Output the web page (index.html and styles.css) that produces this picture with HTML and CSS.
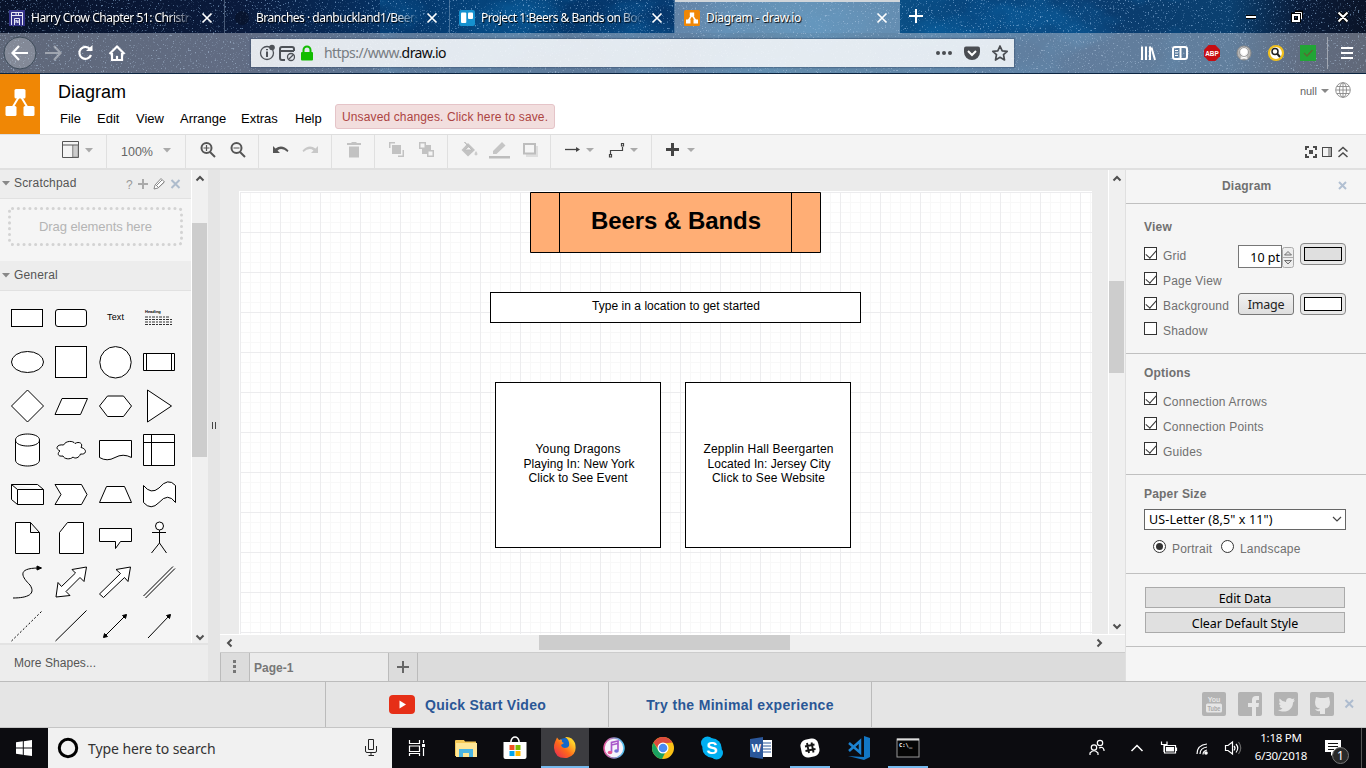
FILE: index.html
```html
<!DOCTYPE html>
<html lang="en">
<head>
<meta charset="utf-8">
<title>Diagram - draw.io</title>
<link rel="stylesheet" href="styles.css">
</head>
<body>
<div class="screen">
<header class="browser">
  <svg class="stars" width="1366" height="74">
    <filter id="starA" x="0" y="0" width="100%" height="100%" color-interpolation-filters="sRGB"><feTurbulence type="fractalNoise" baseFrequency="0.6" numOctaves="2" seed="7"/><feColorMatrix values="0 0 0 0 .65  0 0 0 0 .8  0 0 0 0 .95  7 0 0 0 -4.4"/></filter>
    <filter id="starB" x="0" y="0" width="100%" height="100%" color-interpolation-filters="sRGB"><feTurbulence type="fractalNoise" baseFrequency="0.012 0.02" numOctaves="4" seed="21"/><feColorMatrix values="0 0 0 0 .05  0 0 0 0 .45  0 0 0 0 .72  3 0 0 0 -1.3"/></filter>
    <rect x="380" width="800" height="74" filter="url(#starB)" opacity=".4"/>
    <rect width="1366" height="74" filter="url(#starA)" opacity=".55"/>
  </svg>
  <div class="tabs">
    <div class="tab"><svg width="16" height="16" viewBox="0 0 16 16"><rect width="16" height="16" fill="#35338a"/><path d="M2.500 15V2.500H13.500V15M2 5.500H14M5.500 15V8.500H10.500V15M7 5V2M9.500 5V2M7 13V10L9 13V10" stroke="#e8e8f5" fill="none"/></svg><span class="label fade">Harry Crow Chapter 51: Christr</span><svg class="x" width="12" height="12" viewBox="0 0 12 12"><path d="M1.500 1.500L10.500 10.500M10.500 1.500L1.500 10.500"/></svg></div>
    <div class="tab"><svg width="16" height="16" viewBox="0 0 16 16"><circle cx="8" cy="8" r="7" fill="#060d20" opacity=".5"/></svg><span class="label fade">Branches · danbuckland1/Beers</span><svg class="x" width="12" height="12" viewBox="0 0 12 12"><path d="M1.500 1.500L10.500 10.500M10.500 1.500L1.500 10.500"/></svg></div>
    <div class="tab"><svg width="16" height="16" viewBox="0 0 16 16"><rect width="16" height="16" rx="2" fill="#1591cf"/><rect x="2" y="2.500" width="5.300" height="10.500" rx="1" fill="#fff"/><rect x="9" y="2.500" width="5" height="6.500" rx="1" fill="#fff"/></svg><span class="label fade">Project 1:Beers &amp; Bands on Boo</span><svg class="x" width="12" height="12" viewBox="0 0 12 12"><path d="M1.500 1.500L10.500 10.500M10.500 1.500L1.500 10.500"/></svg></div>
    <div class="tab active"><svg width="16" height="16" viewBox="0 0 16 16"><rect width="16" height="16" rx="1.500" fill="#f08705"/><path d="M8 5L4 11M8 5L12 11" stroke="#fff" stroke-width="1.500"/><path d="M5.800 2.500H10.200V6.500H5.800ZM2 9.500H6.500V13.500H2ZM9.500 9.500H14V13.500H9.500Z" fill="#fff"/></svg><span class="label">Diagram - draw.io</span><svg class="x" width="12" height="12" viewBox="0 0 12 12"><path d="M1.500 1.500L10.500 10.500M10.500 1.500L1.500 10.500"/></svg></div>
    <svg class="newtab" width="32" height="33" viewBox="900 0 32 33"><path d="M909 16H923M916 9V23" stroke="#fff" stroke-width="2"/></svg>
    <svg class="winctl" width="138" height="33" viewBox="1228 0 138 33"><g fill="none" stroke="#000" stroke-width="4"><path d="M1246 17H1256M1293 14.500H1299V20.500H1293ZM1295 12.500H1301V18M1338.500 12.500L1347.500 21.500M1347.500 12.500L1338.500 21.500"/></g><g fill="none" stroke="#fff" stroke-width="2"><path d="M1246 17H1256M1293 15H1299V21H1293ZM1338.500 12.500L1347.500 21.500M1347.500 12.500L1338.500 21.500"/><path stroke-width="1" d="M1295 12.500H1301.500V19"/></g></svg>
  </div>
  <div class="nav">
    <svg width="251" height="40" viewBox="0 33 251 40"><circle cx="20" cy="53" r="16" fill="#fff" fill-opacity=".22" stroke="#3d4b59"/><g fill="none" stroke="#fff" stroke-width="2.200"><path d="M28 53H13M19 46L12.500 53L19 60"/><path opacity=".4" d="M45 53H60M54 46L60.500 53L54 60"/><path d="M90 49A6 6 0 1 0 91 55"/><path d="M109.500 54L117 46.500L124.500 54M112 53V60H122V53M117 60V56"/></g><path d="M86 51H92.500V45Z" fill="#fff"/></svg>
    <div class="urlbar">
      <svg width="66" height="28" viewBox="251 39 66 28"><g fill="none" stroke="#4e5258" stroke-width="1.300"><circle cx="267" cy="53" r="6.500"/><path d="M267 51.500V57M267 49V50.200" stroke-width="2"/><path stroke-width="2" d="M294 51V49Q294 47 292 47H282Q280 47 280 49V58Q280 60 282 60H285M280 51H294"/><circle cx="291" cy="57" r="3.500"/><path d="M288.500 59.500L293.500 54.500"/></g><circle cx="272" cy="47.500" r="2.800" fill="#4e5258"/><rect x="301" y="52" width="12" height="8.500" rx="1" fill="#12bc00"/><path d="M303.500 53V50A3.500 3.500 0 0 1 310.500 50V53" fill="none" stroke="#12bc00" stroke-width="2"/></svg>
      <span class="url">https://www.<b>draw.io</b></span>
      <svg class="end" width="84" height="28" viewBox="930 39 84 28"><g fill="#4a4d52"><circle cx="938" cy="53" r="2"/><circle cx="944" cy="53" r="2"/><circle cx="950" cy="53" r="2"/><path d="M966 46.500H978Q980 46.500 980 48.500V52A8 8 0 0 1 964 52V48.500Q964 46.500 966 46.500Z"/></g><path d="M968 51L972 55L976 51" fill="none" stroke="#fff" stroke-width="2"/><path d="M1000 46L1002.200 50.800L1007.200 51.300L1003.500 54.700L1004.500 60L1000 57.300L995.500 60L996.500 54.700L992.800 51.300L997.800 50.800Z" fill="none" stroke="#4a4d52" stroke-width="1.700" stroke-linejoin="round"/></svg>
    </div>
    <svg class="addons" width="236" height="40" viewBox="1130 33 236 40"><g fill="none" stroke="#fff" stroke-width="2"><path d="M1142 46.500V60M1146 46.500V60M1150 46.500V60M1151.500 47.500L1155 60"/><rect x="1173" y="47" width="14" height="12" rx="2"/><path d="M1180.500 47V59"/><path stroke-width="1" d="M1175 50.500H1178M1175 53H1178M1175 55.500H1178"/></g><path d="M1208.700 45H1215.300L1220 49.700V56.300L1215.300 61H1208.700L1204 56.300V49.700Z" fill="#c70d12"/><text x="1212" y="55.700" textLength="13.500" lengthAdjust="spacingAndGlyphs" class="abp">ABP</text><circle cx="1244" cy="53" r="7" fill="#b5b5b5" stroke="#8a8a8a"/><path d="M1240.500 58.500H1242V55A4 4 0 1 1 1246 55V58.500H1247.500" fill="#fff" stroke="#eee" stroke-width="1.500"/><circle cx="1244" cy="52" r="4.500" fill="none" stroke="#888" stroke-width=".8"/><circle cx="1276" cy="53" r="7" fill="#fff" stroke="#f2c01c" stroke-width="2.200"/><circle cx="1275" cy="51.500" r="3" fill="none" stroke="#222" stroke-width="1.500"/><path d="M1277 53.500L1280 57" stroke="#222" stroke-width="2"/><rect x="1300" y="45" width="16" height="16" fill="#22a536"/><path d="M1304 53L1307 56L1312.500 50" fill="none" stroke="#5a6b32" stroke-width="1.500"/><path d="M1327.500 37V69" stroke="#fff" opacity=".4"/><path d="M1341 48H1353M1341 53H1353M1341 58H1353" stroke="#fff" stroke-width="2"/></svg>
  </div>
</header>

<div class="apphead">
  <svg class="logo" width="40" height="60" viewBox="0 74 40 60"><rect y="74" width="40" height="60" fill="#f08705"/><path d="M20 95L11 110M20 95L29 110" stroke="#fff" stroke-width="2"/><g fill="#fff"><rect x="14.500" y="89" width="11" height="9.500" rx="1.500"/><rect x="5.500" y="106" width="11" height="10" rx="1.500"/><rect x="23.500" y="106" width="11" height="10" rx="1.500"/></g></svg>
  <div class="headmain">
    <div class="doctitle">Diagram</div>
    <div class="menus"><span class="m1">File</span><span class="m2">Edit</span><span class="m3">View</span><span class="m4">Arrange</span><span class="m5">Extras</span><span class="m6">Help</span><span class="unsaved">Unsaved changes. Click here to save.</span></div>
  </div>
  <div class="user"><span>null</span><svg width="34" height="20" viewBox="1318 80 34 20"><path d="M1321 89H1329L1325 93Z" fill="#888"/><g fill="none" stroke="#888" stroke-width=".9"><circle cx="1343" cy="90" r="7.300"/><ellipse cx="1343" cy="90" rx="3.500" ry="7.300"/><path d="M1343 83V97M1336 90H1350M1337 86.500H1349M1337 93.500H1349"/></g></svg></div>
</div>

<div class="toolbar">
  <div class="tg t1"><svg width="44" height="33" viewBox="56 135 44 33"><path d="M62.500 141.500H78.500V157.500H62.500ZM62 145H79M73 145V158" fill="none" stroke="#555"/><rect x="73" y="145.500" width="5" height="11.500" fill="#ccc" stroke="#777" stroke-width=".5"/><path d="M85 148H93L89 152.500Z" fill="#aaa"/></svg></div>
  <div class="tg t2"><span>100%</span><svg width="10" height="6"><path d="M1 0H9L5 4.500Z" fill="#aaa"/></svg></div>
  <div class="tg t3"><svg width="72" height="33" viewBox="186 135 72 33"><g fill="none" stroke="#555" stroke-width="2"><circle cx="206.500" cy="148" r="5"/><path d="M210 152L215 157"/><path stroke-width="1.200" d="M203.500 148H209.500M206.500 145V151M233.500 148H239.500"/><circle cx="236.500" cy="148" r="5"/><path d="M240 152L245 157"/></g></svg></div>
  <div class="tg t4"><svg width="72" height="33" viewBox="259 135 72 33"><path d="M273 146V153H280L277.500 150.500Q282 147 287.500 152L288.500 150.500Q282 143.500 275.500 148.500Z" fill="#555"/><path d="M318 146V153H311L313.500 150.500Q309 147 303.500 152L302.500 150.500Q309 143.500 315.500 148.500Z" fill="#c8c8c8"/></svg></div>
  <div class="tg t5"><svg width="42" height="33" viewBox="332 135 42 33"><path d="M347 143H351L352 142H356L357 143H361V145H347ZM349 146.500H359V157.500H349Z" fill="#c2c2c2"/></svg></div>
  <div class="tg t6"><svg width="72" height="33" viewBox="375 135 72 33"><g fill="#c2c2c2"><path d="M392 145H401V154H392Z"/><path d="M389 142H395V143.500H390.500V148H389ZM398 157H404V150H402.500V155.500H398ZM422 145H431V154H422Z"/></g><path d="M419.750 142.750H425.250V148.250H419.750ZM427.750 150.750H433.250V156.250H427.750Z" fill="#f5f5f5" stroke="#c2c2c2" stroke-width="1.500"/></svg></div>
  <div class="tg t7"><svg width="102" height="33" viewBox="448 135 102 33"><path d="M468 143L475 150L468 156.500L461.500 150Z" fill="#c2c2c2"/><path d="M464.500 142L469 146.500L464.500 150H472L468 146Z" fill="#f5f5f5" stroke="#bbb"/><path d="M476 151Q479 155 476 155.500Q473 155 476 151Z" fill="#ccc"/><path d="M489 156H510V158.500H489Z" fill="#bdbdbd"/><path d="M493 154V151L502 142L505.500 145.500L496.500 154Z" fill="#c5c5c5"/><path d="M526 146H538V157H526Z" fill="#dedede"/><rect x="524" y="144" width="11" height="9.500" fill="#f5f5f5" stroke="#bdbdbd" stroke-width="2"/></svg></div>
  <div class="tg t8"><svg width="100" height="33" viewBox="551 135 100 33"><path d="M565 149.500H578" stroke="#444" stroke-width="1.300"/><path d="M576 147L580 149.500L576 152Z" fill="#444"/><path d="M586 148H594L590 152Z" fill="#aaa"/><path d="M610.500 154V150.500H622.500V147M609.500 154.500H611.500V157H609.500ZM621.500 143.500H623.500V146H621.500Z" fill="none" stroke="#444" stroke-width="1.200"/><path d="M630 148H638L634 152Z" fill="#aaa"/></svg></div>
  <div class="tg t9"><svg width="60" height="33" viewBox="652 135 60 33"><path d="M666 149.500H679M672.500 143V156" stroke="#444" stroke-width="3"/><path d="M687 148H695L691 152Z" fill="#aaa"/></svg></div>
  <svg class="right" width="66" height="33" viewBox="1300 135 66 33"><g fill="none" stroke="#4a4a4a"><path stroke-width="2" d="M1306 150V147H1309M1313 147H1316V150M1316 154V157H1313M1309 157H1306V154"/><rect x="1322.500" y="147.500" width="9" height="9"/><path stroke-width="1.500" d="M1338.500 151.500L1343 147.500L1347.500 151.500M1338.500 157L1343 153L1347.500 157"/></g><rect x="1309" y="150" width="4" height="4" fill="#4a4a4a"/><rect x="1328" y="148" width="3" height="8" fill="#aaa"/></svg>
</div>

<main class="work">
  <aside class="side">
    <div class="sidebody">
      <div class="palette">
        <div class="ptitle"><svg width="14" height="28" viewBox="0 170 14 28"><path d="M2 181H10L6 185.500Z" fill="#888"/></svg><span>Scratchpad</span><svg class="pt" width="66" height="28" viewBox="125 170 66 28"><text x="126" y="189" class="q">?</text><path d="M138 184H148M143 179V189" stroke="#aaa" stroke-width="2"/><path d="M154 189L155 185L161 178.500L164.500 182L158 188ZM156 185L158 187M157 185L162 180M159 187L164 182" fill="#fff" stroke="#888"/><path d="M171.500 180L179.500 188M179.500 180L171.500 188" stroke="#aebccc" stroke-width="2"/></svg></div>
        <div class="scratch"><svg width="191" height="62" viewBox="0 199 191 62"><rect x="9.500" y="208.500" width="172" height="36" rx="3" fill="none" stroke="#d3d3d3" stroke-width="3" stroke-linecap="round" stroke-dasharray="0.100 5.700"/><text x="95.500" y="231" textLength="113" class="drag">Drag elements here</text></svg></div>
        <div class="ptitle gen"><svg width="14" height="28" viewBox="0 170 14 28"><path d="M2 182H10L6 186.500Z" fill="#888"/></svg><span>General</span></div>
        <div class="shapes">
          <svg viewBox="-22 -22 44 44"><rect x="-15.500" y="-8.500" width="31" height="17"/></svg>
          <svg viewBox="-22 -22 44 44"><rect x="-15.500" y="-8.500" width="31" height="17" rx="2.500"/></svg>
          <svg viewBox="-22 -22 44 44"><text x="0.500" y="2" textLength="17" class="st">Text</text></svg>
          <svg viewBox="-22 -22 44 44"><text x="-14" y="-5" class="sh">Heading</text><path class="dash" d="M-14 -1H11M-14 1.500H14M-14 4H13M-14 6.500H14"/></svg>
          <svg viewBox="-22 -22 44 44"><ellipse cx="0.500" cy="0" rx="16" ry="10.500"/></svg>
          <svg viewBox="-22 -22 44 44"><rect x="-15.500" y="-15.500" width="31" height="31"/></svg>
          <svg viewBox="-22 -22 44 44"><circle cx=".5" cy=".3" r="15.700"/></svg>
          <svg viewBox="-22 -22 44 44"><path d="M-15.500 -8.500H15.500V8.500H-15.500ZM-12.500 -8.500V8.500M12.500 -8.500V8.500"/></svg>
          <svg viewBox="-22 -22 44 44"><path d="M.5 -16L16.500 0L.5 16L-15.500 0Z"/></svg>
          <svg viewBox="-22 -22 44 44"><path d="M-9 -7.500H16.500L9.500 8.500H-16Z"/></svg>
          <svg viewBox="-22 -22 44 44"><path d="M-7.500 -10H8.500L16.500 0L8.500 10.500H-7.500L-15.500 0Z"/></svg>
          <svg viewBox="-22 -22 44 44"><path d="M-11.500 -16L12.500 0L-11.500 16Z"/></svg>
          <svg viewBox="-22 -22 44 44"><path d="M-11.500 -10V10C-11.500 18 12.500 18 12.500 10V-10C12.500 -18 -11.500 -18 -11.500 -10C-11.500 -2 12.500 -2 12.500 -10"/></svg>
          <svg viewBox="-22 -22 44 44"><path d="M-7.500 -5C-5 -9.500 2 -9.500 4 -6.500C8 -9 12.500 -6.500 10 -2.500C16.500 -1 15.500 5 9.500 4C8 8 4 9 2 7C-1 10 -7 9 -8 6C-14 7 -13.500 2.500 -11 1C-17 -2 -13 -6 -7.500 -5Z"/></svg>
          <svg viewBox="-22 -22 44 44"><path d="M-15.500 -9.500H16.500V7.500Q8 3 0 7.500Q-8 12 -15.500 7.500Z"/></svg>
          <svg viewBox="-22 -22 44 44"><path d="M-15.500 -15.500H15.500V15.500H-15.500ZM-15.500 -7.500H15.500M-7.500 -15.500V15.500"/></svg>
          <svg viewBox="-22 -22 44 44"><path d="M-15.500 -9.500H10.500L16.500 -4.500V10.500H-9.500L-15.500 5.500ZM-15.500 -9.500L-9.500 -4.500H16.500M-9.500 -4.500V10.500"/></svg>
          <svg viewBox="-22 -22 44 44"><path d="M-16 -9.500H10.500L16 .5L10.500 10.500H-16L-10 .5Z"/></svg>
          <svg viewBox="-22 -22 44 44"><path d="M-8.500 -7.500H9.500L16.500 8.500H-15.500Z"/></svg>
          <svg viewBox="-22 -22 44 44"><path d="M-15.500 -8.500Q-8 1 0 -6Q9 -17 16.500 -8.500V8.500Q9 -2 0 8.500Q-8 17 -15.500 8.500Z"/></svg>
          <svg viewBox="-22 -22 44 44"><path d="M-11.500 -15.500H3.500L12.500 -5.500V15.500H-11.500ZM3.500 -15.500V-5.500H12.500"/></svg>
          <svg viewBox="-22 -22 44 44"><path d="M-3.500 -15.500H12.500V15.500H-11.500V-5.500Z"/></svg>
          <svg viewBox="-22 -22 44 44"><path d="M-15.500 -9.500H16.500V3.500H5.500L.5 10.500V3.500H-15.500Z"/></svg>
          <svg viewBox="-22 -22 44 44"><circle cx=".5" cy="-12" r="4"/><path class="nf" d="M.5 -8V5M-7 -5.500H7M.5 5L-7.500 15M.5 5L7.500 15"/></svg>
          <svg viewBox="-22 -22 44 44"><path class="nf" d="M-14 16C1 16 9 12 3 3C-4 -4 -12 -14 12 -14"/><path class="ff" d="M10 -16L14.500 -14L10 -12Z"/></svg>
          <svg viewBox="-22 -22 44 44"><path d="M-15 15L-13 .5L-9.500 4.500L4.500 -9L1 -12.500L15.500 -15L13 -.5L9 -4.500L-5 9.500L-1 13.500Z"/></svg>
          <svg viewBox="-22 -22 44 44"><path d="M-15.500 12L5.500 -8.500L1 -12.500L15.500 -15L13 -.5L9.500 -4.500L-11.500 15.500Z"/></svg>
          <svg viewBox="-22 -22 44 44"><path class="nf" d="M-15.500 14L14 -15.500M-13.500 16L16 -13.500"/></svg>
          <svg viewBox="-22 -22 44 44"><path class="nf" stroke-dasharray="2 2" d="M-15.500 15L15 -15"/></svg>
          <svg viewBox="-22 -22 44 44"><path class="nf" d="M-15.500 15L15.500 -15.500"/></svg>
          <svg viewBox="-22 -22 44 44"><path class="nf" d="M-10 10L10 -10"/><path class="ff" d="M-11.500 11.500L-10.500 7.500L-7.500 10.500ZM11.500 -11.500L10.500 -7.500L7.500 -10.500Z"/></svg>
          <svg viewBox="-22 -22 44 44"><path class="nf" d="M-11 12L10 -10"/><path class="ff" d="M11.500 -11.500L10.500 -7.500L7.500 -10.500Z"/></svg>
        </div>
      </div>
      <div class="vbar"><svg width="16" height="18"><path d="M4.500 10.500L8 7L11.500 10.500"/></svg><div class="thumb th1"></div><svg class="last" width="16" height="14"><path d="M4.500 6.500L8 10L11.500 6.500"/></svg></div>
    </div>
    <div class="more">More Shapes...</div>
  </aside>
  <div class="split"><svg width="4" height="8"><path d="M.5 0V7M3.500 0V7" stroke="#444"/></svg></div>
  <section class="center">
    <div class="canvasrow">
      <svg class="canvas" width="888" height="464" viewBox="220 170 888 464">
        <defs><pattern id="grid" x="240" y="192" width="40" height="40" patternUnits="userSpaceOnUse"><path d="M10.500 0V40M20.500 0V40M30.500 0V40M0 10.500H40M0 20.500H40M0 30.500H40" stroke="#f8f8f8"/><path d="M.5 0V40M0 .5H40" stroke="#ececee"/></pattern></defs>
        <rect x="220" y="170" width="888" height="464" fill="#ebebeb"/><rect x="239" y="191" width="853" height="443" fill="#fff"/><rect x="240" y="192" width="852" height="442" fill="url(#grid)"/>
        <g stroke="#000" fill="#fff"><path fill="#ffae75" d="M530.500 192.500H820.500V252.500H530.500ZM559.500 192.500V252.500M791.500 192.500V252.500"/><rect x="490.500" y="292.500" width="370" height="30"/><rect x="495.500" y="382.500" width="165" height="165"/><rect x="685.500" y="382.500" width="165" height="165"/></g>
        <g class="ct"><text class="big" x="676" y="229" textLength="170">Beers &amp; Bands</text><text x="676" y="310" textLength="168">Type in a location to get started</text><text x="578" y="453" textLength="85">Young Dragons</text><text x="579" y="468" textLength="111">Playing In: New York</text><text x="578" y="482" textLength="99">Click to See Event</text><text x="768.500" y="453" textLength="130">Zepplin Hall Beergarten</text><text x="769" y="468" textLength="123">Located In: Jersey City</text><text x="768.500" y="482" textLength="113">Click to See Website</text></g>
      </svg>
      <div class="vbar vb2"><svg width="16" height="18"><path d="M4.500 10.500L8 7L11.500 10.500"/></svg><div class="thumb th2"></div><svg class="last" width="16" height="16"><path d="M4.500 6.500L8 10L11.500 6.500"/></svg></div>
    </div>
    <div class="hbar"><svg width="17" height="17"><path d="M11.500 4.500L8 8L11.500 11.500"/></svg><div class="hthumb"></div><svg class="hend" width="34" height="17"><path d="M6.500 4.500L10 8L6.500 11.500"/></svg></div>
    <div class="pages"><div class="dots"><svg width="4" height="14"><path d="M0 0H3V3H0ZM0 5H3V8H0ZM0 10H3V13H0Z" fill="#777"/></svg></div><div class="page">Page-1</div><div class="add"><svg width="12" height="12"><path d="M0 6H12M6 0V12" stroke="#666" stroke-width="2"/></svg></div></div>
  </section>
  <aside class="format">
    <div class="ftitle"><span>Diagram</span><svg width="9" height="9"><path d="M1 1L8 8M8 1L1 8" stroke="#b2c0d2" stroke-width="2"/></svg></div>
    <div class="sec view">
      <h4>View</h4>
      <div class="row"><i class="cb on"></i><span class="w75">Grid</span><div class="num">10 pt</div><svg class="spin" width="12" height="22"><rect x=".5" y=".5" width="11" height="20" rx="2" fill="#eee" stroke="#aaa"/><path d="M0 10.500H12" stroke="#aaa"/><path d="M2.500 8L6 4.500L9.500 8ZM2.500 13.500H9.500L6 17Z" fill="#ddd" stroke="#555" stroke-width=".8"/></svg><div class="color"><b class="gray"></b></div></div>
      <div class="row"><i class="cb on"></i><span>Page View</span></div>
      <div class="row"><i class="cb on"></i><span class="w75">Background</span><div class="imgbtn">Image</div><div class="color"><b></b></div></div>
      <div class="row"><i class="cb"></i><span>Shadow</span></div>
    </div>
    <div class="sec opts">
      <h4>Options</h4>
      <div class="row"><i class="cb on"></i><span>Connection Arrows</span></div>
      <div class="row"><i class="cb on"></i><span>Connection Points</span></div>
      <div class="row"><i class="cb on"></i><span>Guides</span></div>
    </div>
    <div class="sec paper">
      <h4>Paper Size</h4>
      <div class="select"><span>US-Letter (8,5" x 11")</span><svg width="10" height="7"><path d="M1 1L5 5L9 1" fill="none" stroke="#444" stroke-width="1.200"/></svg></div>
      <div class="radios"><i class="rd on"></i><span class="po">Portrait</span><i class="rd"></i><span>Landscape</span></div>
    </div>
    <div class="sec acts"><div class="btn">Edit Data</div><div class="btn">Clear Default Style</div></div>
  </aside>
</main>

<footer class="promo">
  <div class="p1"></div>
  <div class="p2"><svg width="26" height="19"><rect width="26" height="19" rx="4" fill="#e62f17"/><path d="M10.500 5.500L17 9.500L10.500 13.500Z" fill="#fff"/></svg><span>Quick Start Video</span></div>
  <div class="p3"><span>Try the Minimal experience</span></div>
  <svg class="social" width="166" height="46" viewBox="1200 682 166 46"><g fill="#b3b3b3"><rect x="1202" y="692" width="24" height="24" rx="2"/><rect x="1238" y="692" width="24" height="24" rx="2"/><rect x="1274" y="692" width="24" height="24" rx="2"/><rect x="1310" y="692" width="24" height="24" rx="2"/></g><text x="1214" y="702" class="yt">You</text><rect x="1206" y="703.500" width="16" height="9" rx="1.500" fill="#e6e6e6"/><text x="1214" y="710.500" textLength="13" lengthAdjust="spacingAndGlyphs" class="yt g">Tube</text><g fill="#e6e6e6"><path d="M1252 716V707H1248V703H1252V700Q1252 696 1256 696H1259V700H1257Q1256 700 1256 701V703H1259L1258.500 707H1256V716Z"/><path d="M1278 710Q1281 710 1282.500 708.500Q1280 708 1279.500 706H1281Q1279 705 1279 702.500L1280.500 703Q1278.500 701 1279.500 698.500Q1282 701.500 1286 702Q1286 698 1289.500 698Q1291 698 1292 699L1294.500 698.500L1293.500 700.500L1295 700.500L1293 702.500C1293 710 1285 714 1278 710Z"/><path d="M1316 697L1320 698H1325L1329 697L1330 702Q1330 708 1325 708.500V714H1320V711Q1317 712 1315 709Q1318 710 1320 708.500Q1315 708 1315 702Z"/></g><path d="M1345.500 700L1353 707.500M1353 700L1345.500 707.500" stroke="#aebccf" stroke-width="2"/></svg>
</footer>

<footer class="taskbar">
  <div class="start"><svg width="16" height="16"><path d="M0 2.300L6.800 1.300V7.500H0ZM7.800 1.200L16 0V7.500H7.800ZM0 8.500H6.800V14.800L0 13.800ZM7.800 8.500H16V16L7.800 15Z" fill="#fff"/></svg></div>
  <div class="search"><svg width="22" height="22"><circle cx="11" cy="11" r="8.700" fill="none" stroke="#000" stroke-width="3"/></svg><span>Type here to search</span><svg class="mic" width="12" height="18"><path d="M3.500 .5H8.500V10.500H3.500ZM.5 7V12Q.5 13.500 2 13.500H10Q11.500 13.500 11.500 12V7M6 13.500V17M3.500 16.500H9" fill="none" stroke="#222"/></svg></div>
  <div class="app"><svg width="18" height="16"><path d="M1.500 0V3.500H11.500V0M1.500 6H11.500V11.500H1.500ZM1.500 16V13.500H11.500V16M15.500 0V3M15.500 8V16" fill="none" stroke="#fff" stroke-width="1.200"/><rect x="14" y="4" width="3" height="3" fill="#fff"/></svg></div>
  <div class="app"><svg width="22" height="19"><path d="M0 2Q0 1 1 1H9L10 2.500H21V17H0Z" fill="#f5c957"/><path d="M1 4H22V18H1Z" fill="#ffe797"/><path d="M4 10H18V18H14V14H8V18H4Z" fill="#4ab5e3"/></svg></div>
  <div class="app"><svg width="24" height="24"><path d="M8 7V5Q9 1 12 1Q15 1 16 5V7" fill="none" stroke="#fff" stroke-width="1.500"/><path d="M.5 6H23.500V21Q23.500 23 21.500 23H2.500Q.5 23 .5 21Z" fill="#fff"/><path d="M6.500 9H11.500V14H6.500Z" fill="#f25022"/><path d="M12.500 9H17.500V14H12.500Z" fill="#7fba00"/><path d="M6.500 15H11.500V20H6.500Z" fill="#00a4ef"/><path d="M12.500 15H17.500V20H12.500Z" fill="#ffb900"/></svg></div>
  <div class="app active"><svg width="24" height="24"><defs><linearGradient id="fx" x1="0" y1="1" x2="1" y2="0"><stop stop-color="#e4205c"/><stop offset=".45" stop-color="#ff6a1a"/><stop offset=".8" stop-color="#ffd12b"/></linearGradient></defs><circle cx="12" cy="12" r="9" fill="#1568c7"/><path d="M2 7L4 2.500L6 5Q8 4 9 5Q8 7 11 8L8 10Q9 13 12 13Q15 13 16 11Q17 5 12 2Q19 1 22 8Q25 20 14 23Q2 24 1 13Q1 9 2 7Z" fill="url(#fx)"/></svg></div>
  <div class="app"><svg width="24" height="24"><defs><linearGradient id="it"><stop stop-color="#e7589d"/><stop offset="1" stop-color="#4ec4f2"/></linearGradient></defs><circle cx="12" cy="12" r="10" fill="#f6f3fb" stroke="url(#it)" stroke-width="1.500"/><path d="M9.500 16V6.500L16 5V14.500M9.500 9L16 7.500" fill="none" stroke="#a957ca" stroke-width="1.700"/><ellipse cx="8" cy="16.500" rx="2.300" ry="1.800" fill="#e5528f"/><ellipse cx="14.500" cy="15" rx="2.300" ry="1.800" fill="#7471d8"/></svg></div>
  <div class="app"><svg width="24" height="24"><circle cx="12" cy="12" r="11" fill="#fbc116"/><path d="M2.500 6.500A11 11 0 0 1 21.500 6.500L12 7.500L8 14Z" fill="#dc4b3e"/><path d="M2.500 6.500L7.500 14.500L15 15L11 23A11 11 0 0 1 2.500 6.500Z" fill="#1aa260"/><circle cx="12" cy="12" r="5.500" fill="#fff"/><circle cx="12" cy="12" r="4.300" fill="#4a8af4"/></svg></div>
  <div class="app"><svg width="24" height="24"><circle cx="7.500" cy="7" r="6.500" fill="#00aff0"/><circle cx="16.500" cy="17" r="6.500" fill="#00aff0"/><circle cx="12" cy="12" r="9.700" fill="#00aff0"/><text x="12" y="18" class="skype">S</text></svg></div>
  <div class="app"><svg width="24" height="24"><rect x="12" y="4" width="11" height="17" fill="#fff"/><path d="M14 7H22M14 10H22M14 13H22M14 16H22" stroke="#2b579a"/><path d="M1 3L14 1V23L1 21Z" fill="#2b579a"/><text x="7.300" y="16" class="word">W</text></svg></div>
  <div class="app run"><svg width="22" height="22"><rect x="2" y="2" width="18" height="18" rx="6" fill="#fff" transform="rotate(-12 11 11)"/><path d="M8 6L10 16M12.500 5.500L14.500 15.500M6 9.500L15.500 7.500M6.500 14L16.500 12" stroke="#151515" stroke-width="1.900"/></svg></div>
  <div class="app"><svg width="24" height="24"><path d="M17 0L23 2V21L17 24L1 20L17 21Z" fill="#1277c5"/><path d="M2 7L13 16.500V5L2 15" fill="none" stroke="#1c83d1" stroke-width="2.500"/></svg></div>
  <div class="app run"><svg width="24" height="20"><rect x="1" y="1" width="22" height="18" fill="#050505" stroke="#999"/><path d="M1 1.500H23" stroke="#ddd" stroke-width="2"/><text x="3" y="9" class="cmd">C:\_</text></svg></div>
  <svg class="tray" width="180" height="40" viewBox="1070 728 180 40"><g fill="none" stroke="#fff" stroke-width="1.200"><circle cx="1094" cy="747.500" r="2.700"/><path d="M1090 755V753Q1094 748.500 1098 753V755"/><circle cx="1100" cy="743" r="2.700"/><path d="M1099 748Q1103 746 1104 750V751"/><path stroke-width="1.500" d="M1131.500 751L1137 745.500L1142.500 751"/><path d="M1164.500 745.500H1175.500V753H1164.500ZM1176.500 747.500V751"/><path d="M1161.500 741.500V744.500H1167V741.500M1164 744V752"/><path d="M1197 754Q1197 745 1207 744M1200 754Q1200 748 1207 747M1203 754.500Q1203 751 1207 750" /><path d="M1225.500 745.500H1228L1232.500 742V754L1228 750.500H1225.500ZM1234 746Q1236 748 1234 750.500M1236 744Q1239.500 748 1236 752.500"/><path stroke="#666" d="M1238.500 742Q1243 748 1238.500 754"/></g><rect x="1166" y="747" width="8" height="4.500" fill="#fff"/><circle cx="1206" cy="753" r="1.800" fill="#fff"/></svg>
  <div class="clock"><span>1:18 PM</span><span>6/30/2018</span></div>
  <svg class="note" width="45" height="40" viewBox="1321 728 45 40"><path d="M1325 740H1341V752H1335L1331 756V752H1325Z" fill="#fff"/><path d="M1328 743.500H1338M1328 746.500H1338M1328 749.500H1334" stroke="#111"/><circle cx="1340.500" cy="755.500" r="8" fill="#292929" stroke="#777"/><text x="1340.500" y="760" class="cnt">1</text><path d="M1361.500 728V768" stroke="#555"/></svg>
</footer>
</div>
</body>
</html>
```
FILE: styles.css
```css
* { box-sizing: border-box; }
body { margin: 0; font-family: "Liberation Sans", Arial, sans-serif; }
svg { display: block; flex: none; }
.screen { width: 1366px; height: 768px; display: flex; flex-direction: column; overflow: hidden; background: #f5f5f5; }

/* browser chrome */
.browser { position: relative; height: 74px; flex: none; font-family: "Noto Sans", "Open Sans", sans-serif; background: linear-gradient(90deg, #081229 0, #0a1a3c 240px, #043468 400px, #05447c 480px, #04376b 560px, #06356a 660px, #0f5a8e 780px, #0b5086 890px, #07437b 980px, #0a3b6e 1090px, #0a4070 1230px, #0a1c3a 1300px, #0a1327 1366px); }
.stars { position: absolute; left: 0; top: 0; }
.tabs { position: relative; display: flex; height: 33px; }
.tab { width: 225px; display: flex; align-items: center; padding: 2px 11px 0 9px; border-right: 1px solid rgba(190,210,230,.35); color: #fff; font-size: 12px; flex: none; }
.tab.active { background: rgba(190,204,222,.5); border-top: 2px solid #d0d5da; border-right: 0; padding-top: 0; padding-right: 12px; }
.label { flex: 1; margin: 0 6px 0 6px; white-space: nowrap; line-height: 18px; letter-spacing: -.5px; text-shadow: 1px 1px 1px #000; }
.tab.active .label { letter-spacing: -.3px; }
.fade { -webkit-mask-image: linear-gradient(90deg, #000 84%, transparent 99%); mask-image: linear-gradient(90deg, #000 84%, transparent 99%); }
.x path { stroke: #fff; stroke-width: 1.7; }
.winctl { margin-left: auto; }
.nav { position: relative; display: flex; height: 41px; background: rgba(184,190,202,.5); border-bottom: 1px solid #0b2440; }
.urlbar { width: 763px; height: 28px; margin-top: 6px; display: flex; align-items: center; background: rgba(247,249,251,.87); box-shadow: 0 0 1px 1px rgba(50,70,100,.4); font-size: 14px; }
.url { margin-left: 7px; color: #777c82; letter-spacing: -.57px; line-height: 22px; }
.url b { font-weight: 400; color: #0c0c0d; }
.end, .addons { margin-left: auto; }
.abp { font: bold 7px "Liberation Sans", sans-serif; fill: #fff; text-anchor: middle; }

/* application header */
.apphead { display: flex; height: 61px; background: #fff; border-bottom: 1px solid #dedede; flex: none; }
.headmain { padding: 6px 0 0 18px; }
.doctitle { font-size: 18px; line-height: 24px; }
.menus { display: flex; font-size: 13px; line-height: 30px; height: 30px; padding-left: 2px; color: #000; }
.m1 { width: 37px; } .m2 { width: 39px; } .m3 { width: 44px; } .m4 { width: 61px; } .m5 { width: 54px; } .m6 { width: 40px; }
.unsaved { width: 220px; height: 25px; line-height: 24px; padding-left: 6px; color: #ad4442; background: #f2dede; border: 1px solid #e5c4c8; border-radius: 3px; font-size: 12px; letter-spacing: .13px; white-space: nowrap; }
.user { display: flex; margin: 7px 14px 0 auto; font-size: 11px; line-height: 20px; color: #666; }
.user span { margin-right: 1px; }
.user svg { margin-top: -1px; }
.toolbar { display: flex; height: 35px; background: #f4f4f4; border-bottom: 2px solid #e0e0e0; flex: none; }
.tg { border-right: 1px solid #e0e0e0; display: flex; }
.t1 { width: 107px; padding-left: 56px; } .t2 { width: 79px; padding: 8px 0 0 14px; font-size: 12.5px; color: #666; line-height: 18px; }
.t2 svg { margin: 5px 0 0 9px; } .t3, .t4, .t6 { width: 73px; } .t5 { width: 43px; } .t7 { width: 103px; } .t8 { width: 101px; } .t9 { border: 0; }
.right { margin-left: auto; }

/* workspace */
.work { display: flex; height: 511px; flex: none; }
.side { width: 208px; display: flex; flex-direction: column; }
.sidebody { display: flex; height: 473px; }
.palette { width: 192px; overflow: hidden; border-right: 1px solid #fff; background: #f5f5f5; }
.ptitle { display: flex; height: 29px; background: #ededed; border-bottom: 1px solid #e1e1e1; color: #555; font-size: 12px; line-height: 26px; }
.ptitle span { letter-spacing: .18px; }
.ptitle.gen { height: 30px; line-height: 28px; }
.pt { margin-left: auto; }
.q { font-size: 12px; fill: #999; }
.scratch { height: 62px; }
.drag { font-size: 13px; fill: #b4b4b4; text-anchor: middle; }
.shapes { display: grid; grid-template-columns: repeat(4, 44px); padding: 5px 0 0 5px; }
.shapes svg { width: 44px; height: 44px; fill: #fff; stroke: #000; }
.shapes text { stroke: none; fill: #000; }
.shapes .nf { fill: none; } .shapes .ff { fill: #000; }
.st { font-size: 9px; text-anchor: middle; } .sh { font-size: 4px; font-weight: bold; }
.dash { stroke-dasharray: 3 1 2 1; stroke-width: .8; }
.vbar { width: 16px; display: flex; flex-direction: column; background: #f0f0f0; }
.vbar path, .hbar path { fill: none; stroke: #505050; stroke-width: 2; }
.thumb { background: #cdcdcd; width: 15px; }
.th1 { margin-top: 35px; height: 234px; } .th2 { margin-top: 93px; height: 92px; }
.last { margin-top: auto; }
.vb2 { border-left: 1px solid #fff; width: 17px; height: 464px; }
.more { height: 38px; background: #ededed; border-top: 2px solid #e3e3e3; padding: 0 0 0 14px; font-size: 12px; line-height: 36px; letter-spacing: .05px; color: #555; }
.split { width: 12px; background: #e5e5e5; display: flex; align-items: center; justify-content: center; }
.center { width: 905px; display: flex; flex-direction: column; background: #dcdcdc; }
.canvasrow { display: flex; height: 464px; }
.ct { font-size: 12px; text-anchor: middle; } .big { font-size: 24px; font-weight: bold; }
.hbar { display: flex; height: 18px; background: #f0f0f0; border-top: 1px solid #fff; }
.hthumb { width: 251px; height: 15px; margin: 0 0 0 302px; background: #cdcdcd; }
.hend { margin-left: auto; }
.pages { display: flex; height: 29px; border-top: 1px solid #ccc; color: #777; font-weight: bold; font-size: 12px; }
.pages > div { border-right: 1px solid #bbb; background: #e8e8e8; }
.pages .dots { width: 30px; border-left: 1px solid #bbb; display: flex; justify-content: center; align-items: center; background: #dcdcdc; }
.pages .page { width: 139px; padding-left: 4px; line-height: 30px; background: #ebebeb; }
.pages .add { width: 29px; display: flex; align-items: center; justify-content: center; background: #dcdcdc; }

/* format panel */
.format { width: 241px; border-left: 1px solid #e0e0e0; background: #f5f5f5; color: #707070; font-size: 12px; letter-spacing: .2px; }
.ftitle { height: 34px; border-bottom: 1px solid #c0c0c0; display: flex; font-weight: bold; padding: 8px 0 0 96px; line-height: 16px; }
.ftitle svg { margin: 3px 0 0 67px; }
.sec { border-bottom: 1px solid #c0c0c0; padding-left: 18px; }
.sec h4 { margin: 0; font-size: 12px; line-height: 16px; }
.view { height: 150px; padding-top: 15px; } .opts { height: 121px; padding-top: 11px; } .paper { height: 99px; padding-top: 11px; } .acts { height: 73px; padding-top: 13px; }
.row { display: flex; height: 25px; }
.view h4 { margin-bottom: 8px; } .opts h4 { margin-bottom: 9px; }
.row > span { line-height: 26px; height: 25px; } .opts .row > span { line-height: 25px; }
.cb { width: 13px; height: 13px; border: 1px solid #333; background: #fff; margin: 4px 6px 0 0; display: flex; justify-content: center; padding-top: 1px; flex: none; }
.opts .cb { margin-top: 2px; }
.cb.on::after { content: ""; width: 9px; height: 5px; border-left: 1.5px solid #333; border-bottom: 1.5px solid #333; transform: rotate(-48deg); margin-top: 1px; }
.w75 { width: 75px; }
.num { width: 44px; height: 23px; margin-top: 2px; background: #fff; border: 1px solid #777; color: #000; text-align: right; padding-right: 1px; font: 12.5px/23px "Noto Sans", sans-serif; letter-spacing: 0; }
.spin { margin: 4px 6px 0 0; }
.color { width: 46px; height: 22px; margin-top: 0; border: 1px solid #888; border-radius: 4px; background: #e8e8e8; padding: 3px; flex: none; }
.color b { display: block; height: 14px; background: #fff; border: 1px solid #000; } .color .gray { background: #dfdfdf; }
.imgbtn { width: 56px; height: 22px; margin: 0 6px 0 0; border: 1px solid #777; border-radius: 3px; background: linear-gradient(#f2f2f2, #dedede); color: #222; text-align: center; font: 12.5px/21px "Noto Sans", sans-serif; letter-spacing: -.25px; }
.select { width: 202px; height: 21px; margin-top: 7px; border: 1px solid #666; background: #fff; color: #000; display: flex; align-items: center; padding: 0 3px 0 4px; font: 12.5px/18px "Noto Sans", sans-serif; letter-spacing: .12px; }
.select svg { margin-left: auto; }
.radios { display: flex; padding: 9px 0 0 9px; line-height: 20px; }
.rd { width: 13px; height: 13px; border: 1px solid #333; border-radius: 50%; background: #fff; margin: 1px 6px 0 0; padding: 2px; }
.rd.on::after { content: ""; display: block; width: 7px; height: 7px; border-radius: 50%; background: #333; }
.po { width: 49px; }
.btn { width: 200px; height: 21px; margin: 0 0 4px 1px; border: 1px solid #aaa; background: #e0e0e0; color: #000; text-align: center; font: 12.5px/21px "Noto Sans", sans-serif; letter-spacing: -.08px; }

/* promo strip */
.promo { display: flex; height: 47px; flex: none; background: #e5e5e5; border-top: 1px solid #bcbcbc; border-bottom: 1px solid #c5c5c5; color: #2a5796; font-weight: bold; font-size: 14px; }
.p1 { width: 326px; border-right: 1px solid #bbb; }
.p2 { width: 283px; border-right: 1px solid #bbb; display: flex; align-items: center; padding-left: 63px; } .p2 span { margin-left: 10px; letter-spacing: .27px; }
.p3 { width: 263px; border-right: 1px solid #bbb; display: flex; align-items: center; justify-content: center; letter-spacing: .33px; }
.social { margin-left: auto; }
.yt { font: bold 7px "Liberation Sans", sans-serif; fill: #e6e6e6; text-anchor: middle; } .yt.g { fill: #aaa; font-size: 6.500px; }

/* desktop task bar */
.taskbar { height: 40px; flex: none; display: flex; background: #0c0c10; font-family: "Noto Sans", "Open Sans", sans-serif; }
.start { width: 48px; display: flex; align-items: center; justify-content: center; }
.search { width: 344px; background: #f1f1f1; display: flex; align-items: center; padding: 0 15px 0 9px; color: #333; font-size: 14px; }
.search span { margin-left: 9px; letter-spacing: -.07px; }
.mic { margin-left: auto; }
.app { width: 49px; display: flex; align-items: center; justify-content: center; flex: none; }
.app.active { background: #3c3c40; width: 48px; margin: 0 0 0 2px; border-bottom: 2px solid #76b9ed; }
.app.run { box-shadow: inset 0 -2px #76b9ed; width: 40px; margin: 0 4.500px; }
.skype { font: bold 17px "Liberation Sans", sans-serif; fill: #fff; text-anchor: middle; }
.word { font: bold 10px "Liberation Sans", sans-serif; fill: #fff; text-anchor: middle; }
.cmd { font: bold 5.500px "DejaVu Sans Mono", monospace; fill: #fff; }
.tray { margin-left: auto; }
.clock { width: 71px; color: #fff; font-size: 11.500px; letter-spacing: -.25px; text-align: center; display: flex; flex-direction: column; line-height: 18px; padding: 1px 9px 0 0; }
.cnt { font-size: 12px; fill: #fff; text-anchor: middle; }
```
